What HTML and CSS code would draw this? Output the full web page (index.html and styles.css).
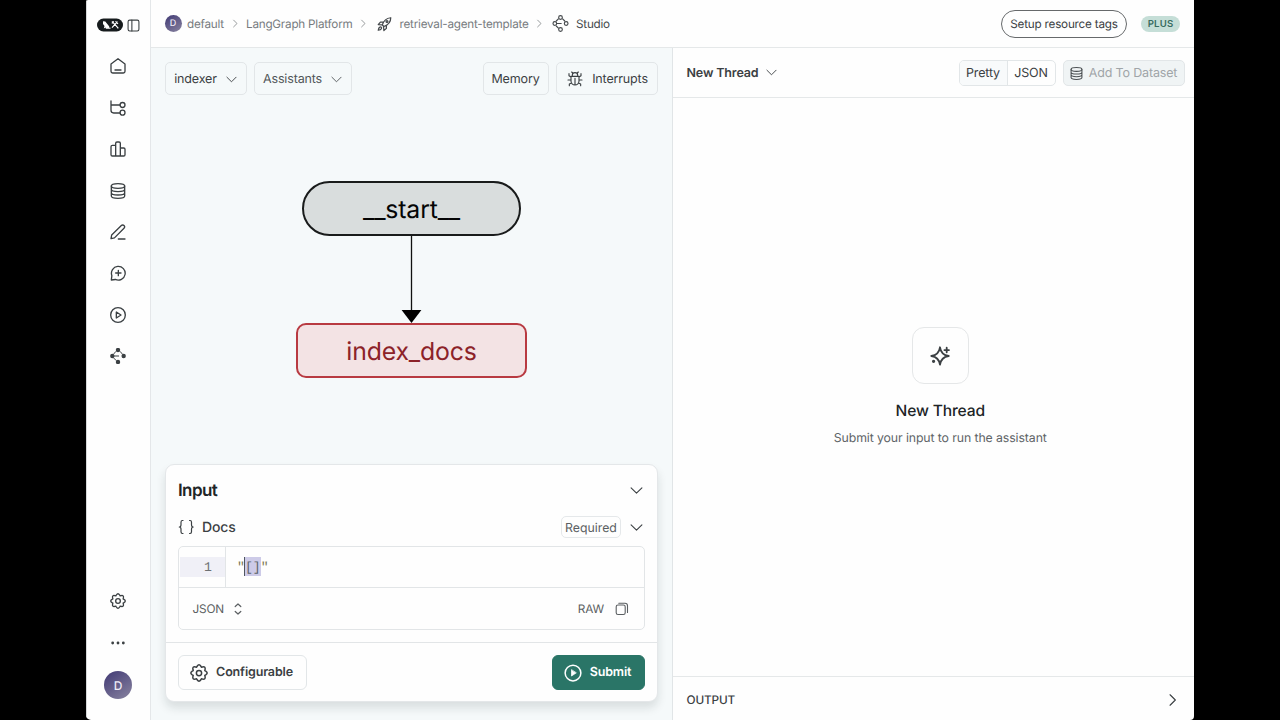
FILE: index.html
```html
<!DOCTYPE html>
<html lang="en">
<head>
    <meta charset="UTF-8">
    <meta name="viewport" content="width=device-width, initial-scale=1.0">
    <title>Studio</title>
    <link rel="stylesheet" href="styles.css">
</head>
<body>
    <!-- shared icons -->
    <svg class="defs" width="0" height="0">
        <symbol id="chevron" viewBox="0 0 24 24"><path d="M2 7l10 10L22 7"/></symbol>
        <symbol id="chevron-right" viewBox="0 0 24 24"><path d="M7 3l9 9-9 9"/></symbol>
        <symbol id="database" viewBox="0 0 24 24"><ellipse cx="12" cy="4.500" rx="10" ry="3.500"/><path d="M2 4.500v15c0 1.900 4.500 3.500 10 3.500s10-1.600 10-3.500v-15M2 9.500c0 1.900 4.500 3.500 10 3.500s10-1.600 10-3.500M2 14.500c0 1.900 4.500 3.500 10 3.500s10-1.600 10-3.500"/></symbol>
        <symbol id="gear" viewBox="0 0 24 24"><circle cx="12" cy="12" r="3.500"/><path d="M9.500 3Q12-.8 14.500 3L15.200 4.300 16.600 3.900Q21 2.900 20.100 7.400L19.700 8.800 21 9.500Q24.800 12 21 14.500L19.700 15.200 20.100 16.600Q21 21 16.600 20.100L15.200 19.700 14.500 21Q12 24.800 9.500 21L8.800 19.700 7.400 20.100Q2.900 21 3.900 16.600L4.300 15.200 3 14.500Q-.8 12 3 9.500L4.300 8.800 3.900 7.400Q2.900 2.900 7.400 3.900L8.800 4.300Z"/></symbol>
        <symbol id="play" viewBox="0 0 24 24"><circle cx="12" cy="12" r="11"/><path d="M9.500 7.500v9l7-4.500z"/></symbol>
    </svg>

    <div class="window">
        <nav class="sidebar">
            <div class="brand">
                <svg class="logo" viewBox="0 0 26 14">
                    <rect width="26" height="13" y=".5" rx="6.5" fill="#161b1d"/>
                    <path d="M6 3.300l2.300.3 3.800 4.600.3 1.600h1.400l-.5 1H8.900l-.4-1.200-1.700.9.700-2.400L6 6z" fill="#fff"/>
                    <path d="M15 3.300l6 6.500M20.500 3.700l-5.500 6M14.800 5.400l2-2M18.500 3.300l2.500 2.500M20 9.500l1.400.6" fill="none" stroke="#fff" stroke-width="1.200"/>
                </svg>
                <svg class="icon panel-icon" viewBox="0 0 24 24"><rect x="2" y="2" width="20" height="20" rx="3"/><path d="M9 2v20"/></svg>
            </div>
            <div class="nav-list">
                <svg class="icon nav-icon" viewBox="0 0 24 24"><path d="M1.500 9L12 1.200 22.500 9v11a2.500 2.500 0 0 1-2.500 2.500H4A2.500 2.500 0 0 1 1.500 20zM7.500 18h9"/></svg>
                <svg class="icon nav-icon" viewBox="0 0 24 24"><path d="M1.500 1.500v14a4 4 0 0 0 4 4H15M1.500 7.500H15"/><circle cx="18.800" cy="7.500" r="3.700"/><circle cx="18.800" cy="19" r="3.700"/></svg>
                <svg class="icon nav-icon" viewBox="0 0 24 24"><path d="M8.500 22.500V3.500a2 2 0 0 1 2-2h3a2 2 0 0 1 2 2v19M8.500 6.500h-5a2 2 0 0 0-2 2v12a2 2 0 0 0 2 2h17a2 2 0 0 0 2-2v-8a2 2 0 0 0-2-2h-5"/></svg>
                <svg class="icon nav-icon"><use href="#database"/></svg>
                <svg class="icon nav-icon" viewBox="0 0 24 24"><path d="M12.500 22.500h10M1.500 22l1-5.500L17 2.300a2.800 2.800 0 0 1 4 4L6.700 20.800z"/></svg>
                <svg class="icon nav-icon" viewBox="0 0 24 24"><path d="M2 22.500l.8-6.500A10.300 10.300 0 1 1 8 21.700zM12.500 8v8M8.500 12h8"/></svg>
                <svg class="icon nav-icon"><use href="#play"/></svg>
                <svg class="icon nav-icon" viewBox="0 0 24 24"><g fill="currentColor"><circle cx="12" cy="3" r="2.300"/><circle cx="3.500" cy="12" r="2.300"/><circle cx="20.500" cy="12" r="2.300"/><circle cx="12" cy="21" r="2.300"/></g><path d="M8.500 5.500L6 8.500M15.500 5.500L18 8.500M6 15.500l3 3M6 12h7" stroke-width="1.500"/></svg>
            </div>
            <div class="nav-bottom">
                <svg class="icon nav-icon"><use href="#gear"/></svg>
                <svg class="icon nav-icon" viewBox="0 0 24 24"><g fill="currentColor" stroke="none"><circle cx="4" cy="12" r="2.100"/><circle cx="12" cy="12" r="2.100"/><circle cx="20" cy="12" r="2.100"/></g></svg>
                <span class="avatar avatar-large">D</span>
            </div>
        </nav>

        <div class="main">
            <header class="topbar">
                <div class="breadcrumb">
                    <span class="avatar">D</span>
                    <span class="crumb crumb-default">default</span>
                    <svg class="icon separator"><use href="#chevron-right"/></svg>
                    <span class="crumb crumb-platform">LangGraph Platform</span>
                    <svg class="icon separator"><use href="#chevron-right"/></svg>
                    <svg class="icon rocket" viewBox="0 0 24 24"><path d="M8.500 13.500C10.500 7 15 2.500 22 2c0 7-4 11.500-11 14zM9.500 9H5.500L2 13l6.500.5M15 14.500V19l-4 3.500-.5-6M4.500 17C2.500 18 2 22 2 22s4-.5 5-2.500a1.800 1.800 0 0 0-2.500-2.500z"/><circle cx="16" cy="8" r="1.500"/></svg>
                    <span class="crumb crumb-template">retrieval-agent-template</span>
                    <svg class="icon separator"><use href="#chevron-right"/></svg>
                    <svg class="icon graph-icon" viewBox="0 0 24 24"><circle cx="12" cy="3.500" r="2.600"/><circle cx="4" cy="12" r="2.600"/><circle cx="20" cy="12" r="2.600"/><circle cx="12" cy="20.500" r="2.600"/><path d="M9 5.500L6 8.500M15 5.500L18 8.500M7 12h6M6 15.500l3 3"/></svg>
                    <span class="crumb current">Studio</span>
                </div>
                <div class="topbar-right">
                    <button class="tags-button">Setup resource tags</button>
                    <span class="plan">PLUS</span>
                </div>
            </header>

            <div class="content">
                <section class="graph-pane">
                    <div class="toolbar">
                        <button class="tool indexer">indexer <svg class="icon chevron-small"><use href="#chevron"/></svg></button>
                        <button class="tool assistants">Assistants <svg class="icon chevron-small"><use href="#chevron"/></svg></button>
                        <button class="tool memory">Memory</button>
                        <button class="tool interrupts">
                            <svg class="icon bug" viewBox="0 0 24 24"><path d="M6 8h12v7a6 6 0 0 1-12 0zM8 8V6.500a4 4 0 0 1 8 0V8M12 11v10M8.500 3L7 1.500M15.500 3L17 1.500M6 13.500H1.500M18 13.500h4.500M6 9L3 7V4M18 9l3-2V4M7 18l-3.500 1.500V22M17 18l3.500 1.500V22"/></svg>
                            Interrupts
                        </button>
                    </div>

                    <div class="graph">
                        <div class="node start-node">__start__</div>
                        <svg class="edge" viewBox="0 0 22 87"><path d="M10.500 0v76" stroke="#111" stroke-width="1.300"/><path d="M.6 74h19.800l-9.900 13z"/></svg>
                        <div class="node docs-node">index_docs</div>
                    </div>

                    <div class="card">
                        <div class="card-head">
                            <h2>Input</h2>
                            <svg class="icon chevron-big"><use href="#chevron"/></svg>
                        </div>
                        <div class="field-head">
                            <svg class="icon braces" viewBox="0 0 17 16"><path d="M5 1.500h-.6Q3 1.500 3 3.200v2.600Q3 8 1.300 8 3 8 3 10.200v2.600q0 1.700 1.400 1.700H5M11.500 1.500h.6Q13.500 1.500 13.500 3.200v2.600Q13.500 8 15.200 8 13.500 8 13.500 10.200v2.600q0 1.700-1.400 1.700h-.6"/></svg>
                            <span class="field-name">Docs</span>
                            <span class="required">Required</span>
                            <svg class="icon chevron-big"><use href="#chevron"/></svg>
                        </div>
                        <div class="editor">
                            <div class="code">
                                <div class="gutter"><span>1</span></div>
                                <div class="line"><span>"</span><span class="selection">[]</span><span>"</span></div>
                            </div>
                            <div class="editor-foot">
                                <span class="format">JSON</span>
                                <svg class="icon updown" viewBox="0 0 8 12"><path d="M1.200 3.500L4 1l2.800 2.500M1.200 8.500L4 11l2.800-2.500"/></svg>
                                <span class="raw">RAW</span>
                                <svg class="icon copy" viewBox="0 0 14 14"><rect x="1.200" y="3" width="9" height="9.500" rx="1.800"/><path d="M3.800 1.200h6.200a2.500 2.500 0 0 1 2.500 2.500v6.800"/></svg>
                            </div>
                        </div>
                        <div class="card-foot">
                            <button class="configurable"><svg class="icon button-icon"><use href="#gear"/></svg>Configurable</button>
                            <button class="submit"><svg class="icon submit-icon" viewBox="0 0 24 24"><circle cx="12" cy="12" r="10.500"/><path d="M10 8v8l6-4z" fill="currentColor" stroke-width="1"/></svg>Submit</button>
                        </div>
                    </div>
                </section>

                <section class="thread-pane">
                    <div class="thread-head">
                        <span class="thread-name">New Thread</span>
                        <svg class="icon chevron-small"><use href="#chevron"/></svg>
                        <div class="toggle"><span class="pretty">Pretty</span><span class="json">JSON</span></div>
                        <button class="dataset"><svg class="icon"><use href="#database"/></svg>Add To Dataset</button>
                    </div>
                    <div class="empty">
                        <div class="empty-icon">
                            <svg class="icon" viewBox="0 0 24 24"><path d="M12 2.500q1.200 8.300 9.500 9.500-8.300 1.200-9.500 9.500Q10.800 13.200 2.500 12 10.800 10.800 12 2.500zM19.300 3v5M16.800 5.500h5"/><circle cx="5" cy="17.800" r=".8" fill="currentColor"/></svg>
                        </div>
                        <h3>New Thread</h3>
                        <p>Submit your input to run the assistant</p>
                    </div>
                    <div class="output">
                        <span>OUTPUT</span>
                        <svg class="icon"><use href="#chevron-right"/></svg>
                    </div>
                </section>
            </div>
        </div>
    </div>
</body>
</html>
```
FILE: styles.css
```css
* {
    box-sizing: border-box;
}
body {
    margin: 0;
    height: 720px;
    background-color: #000;
    font-family: Inter, sans-serif;
    font-size: 12.5px;
    letter-spacing: -0.15px;
    color: #3b4043;
    text-rendering: geometricPrecision;
    overflow: hidden;
}
button {
    font-family: inherit;
    font-size: 12.5px;
    letter-spacing: inherit;
    color: inherit;
    text-rendering: inherit;
    padding: 0;
    background: none;
    border: 1px solid #e2e6e8;
    border-radius: 5px;
    display: flex;
    align-items: center;
    white-space: nowrap;
}
h2, h3, p {
    margin: 0;
}
.defs {
    position: absolute;
}
.icon {
    width: 16px;
    height: 16px;
    flex: none;
    fill: none;
    stroke: currentColor;
    stroke-width: 2;
    stroke-linecap: round;
    stroke-linejoin: round;
}
.window {
    width: 1107.5px;
    height: 720px;
    margin-left: 86px;
    display: flex;
    background-color: #fefefe;
    border-radius: 2px 0 4px 5px;
    overflow: hidden;
}

/* sidebar */
.sidebar {
    width: 65px;
    padding-right: 1px;
    border-left: 1px solid #d6d8d9;
    border-right: 1px solid #e4e7e9;
    display: flex;
    flex-direction: column;
    align-items: center;
}
.brand {
    display: flex;
    align-items: center;
    gap: 4px;
    margin-top: 18px;
    height: 14px;
}
.logo {
    width: 26px;
    height: 14px;
}
.panel-icon {
    width: 13px;
    height: 13px;
}
.nav-list {
    margin-top: 26.4px;
    display: flex;
    flex-direction: column;
    gap: 25.4px;
}
.nav-bottom {
    margin-top: auto;
    margin-bottom: 21px;
    display: flex;
    flex-direction: column;
    align-items: center;
    gap: 25.5px;
}
.avatar {
    width: 17px;
    height: 17px;
    flex: none;
    border-radius: 50%;
    background: linear-gradient(145deg, #403974, #8984a0);
    color: #eeeaf6;
    font-size: 9px;
    font-weight: 500;
    display: flex;
    align-items: center;
    justify-content: center;
}
.avatar-large {
    width: 28px;
    height: 28px;
    font-size: 12px;
    margin-top: -5px;
}

/* top bar */
.main {
    flex: 1;
    min-width: 0;
    display: flex;
    flex-direction: column;
}
.topbar {
    height: 48px;
    border-bottom: 1px solid #e5e8e9;
    padding: 0 13.5px;
    display: flex;
    align-items: center;
    justify-content: space-between;
}
.breadcrumb {
    display: flex;
    align-items: center;
    color: #777b7e;
    font-size: 11.7px;
    letter-spacing: -0.22px;
    white-space: nowrap;
}
.separator {
    width: 9px;
    height: 9px;
    margin: 0 6.5px;
}
.crumb-default {
    margin-left: 5.5px;
    width: 37px;
}
.crumb-platform {
    width: 106px;
}
.rocket {
    width: 15px;
    margin: 0 8px 0 2.5px;
}
.crumb-template {
    width: 129px;
}
.graph-icon {
    width: 17px;
    height: 17px;
    margin-left: 1.5px;
    margin-right: 7px;
    stroke-width: 1.6;
}
.graph-icon, .current, .rocket {
    color: #45494c;
}
.topbar-right {
    display: flex;
    align-items: center;
    gap: 14px;
}
.tags-button {
    width: 126px;
    height: 28px;
    border: 1px solid #66696b;
    border-radius: 14px;
    justify-content: center;
    font-size: 11.7px;
    letter-spacing: -0.2px;
}
.plan {
    width: 39px;
    height: 16px;
    border-radius: 8px;
    background-color: #c5ded7;
    color: #386c60;
    font-size: 9.6px;
    font-weight: 600;
    letter-spacing: 0.2px;
    line-height: 17px;
    text-align: center;
}

/* graph */
.content {
    flex: 1;
    min-height: 0;
    display: flex;
}
.graph-pane {
    width: 522px;
    background-color: #f5f9fa;
    border-right: 1px solid #e1e5e7;
    padding: 14px 14px 18px;
    display: flex;
    flex-direction: column;
}
.toolbar {
    display: flex;
    gap: 7px;
}
.tool {
    height: 33px;
    padding: 1px 1px 0 0;
    justify-content: center;
}
.indexer {
    width: 82px;
    gap: 9px;
}
.assistants {
    width: 98px;
    gap: 9px;
    color: #515659;
}
.memory {
    width: 66px;
    margin-left: auto;
}
.interrupts {
    width: 102px;
    padding: 1px 0 0 1px;
    gap: 9px;
}
.bug {
    stroke-width: 1.7;
}
.chevron-small {
    width: 11px;
    height: 11px;
}
.graph {
    flex: 1;
    padding-top: 86px;
    display: flex;
    flex-direction: column;
    align-items: center;
}
.node {
    height: 55px;
    font-size: 24.8px;
    display: flex;
    align-items: center;
    justify-content: center;
}
.start-node {
    width: 219px;
    padding-top: 1px;
    border: 2px solid #191b1b;
    border-radius: 28px;
    background-color: #d9dddd;
    color: #050505;
}
.docs-node {
    width: 231px;
    border: 2px solid #b83a41;
    border-radius: 10px;
    background-color: #f3e3e4;
    color: #8c2228;
}
.edge {
    width: 22px;
    height: 87px;
    flex: none;
}

/* input card */
.card {
    height: 238px;
    background-color: #fefefe;
    border: 1px solid #e4e7e9;
    border-radius: 9px;
    box-shadow: 0 6px 10px rgba(20, 30, 35, 0.12);
}
.card-head, .field-head {
    display: flex;
    align-items: center;
    padding: 0 14px 0 12px;
}
.card-head {
    height: 50px;
    justify-content: space-between;
}
.card-head h2 {
    padding-top: 1px;
    font-size: 17px;
    font-weight: 600;
    letter-spacing: -0.6px;
    color: #202426;
}
.chevron-big {
    width: 13px;
    height: 13px;
}
.field-head {
    height: 24px;
}
.braces {
    width: 17px;
    stroke-width: 1.2;
}
.field-name {
    margin-left: 7px;
    font-size: 14px;
    font-weight: 500;
    letter-spacing: -0.1px;
}
.required {
    width: 60px;
    height: 22px;
    margin-left: auto;
    margin-right: 9px;
    border: 1px solid #e5e8ea;
    border-radius: 5px;
    color: #5b5f62;
    font-size: 12.3px;
    letter-spacing: 0;
    line-height: 21px;
    text-align: center;
}
.editor {
    height: 84px;
    margin: 7px 12px 12px;
    border: 1px solid #e2e5e7;
    border-radius: 5px;
}
.code {
    height: 41px;
    display: flex;
    border-bottom: 1px solid #e2e5e7;
    font-family: "Liberation Mono", monospace;
    font-size: 13.2px;
    letter-spacing: 0;
}
.gutter {
    width: 47px;
    padding: 10px 0 0 1px;
    border-right: 1px solid #e2e5e7;
}
.gutter span {
    display: block;
    height: 20px;
    padding-right: 13px;
    background-color: #f0f0f7;
    color: #6d7073;
    line-height: 21px;
    text-align: right;
}
.line {
    display: flex;
    padding: 10px 0 0 11px;
    line-height: 21px;
    color: #7b7754;
}
.selection {
    height: 19px;
    margin-left: -1px;
    background-color: #cdcbe8;
    border-left: 1px solid #4f5560;
    color: #5b6369;
}
.editor-foot {
    height: 41px;
    padding: 0 15px 0 13.5px;
    display: flex;
    align-items: center;
    color: #5b5f62;
    font-size: 11.8px;
}
.updown {
    width: 8px;
    height: 12px;
    margin-left: 10px;
    stroke-width: 1.2;
}
.raw {
    margin-left: auto;
}
.copy {
    width: 14px;
    height: 14px;
    margin-left: 11px;
    stroke-width: 1.1;
}
.card-foot {
    border-top: 1px solid #e2e5e7;
    padding: 12px;
    display: flex;
    justify-content: space-between;
}
.configurable, .submit {
    height: 35px;
    justify-content: center;
    font-weight: 600;
    gap: 8px;
    border-radius: 6px;
    padding: 0 2px 0 0;
}
.configurable {
    width: 129px;
}
.submit {
    width: 93px;
    background-color: #2a7567;
    border-color: #2a7567;
    color: #fff;
}
.button-icon, .submit-icon {
    width: 18px;
    height: 18px;
}

/* thread */
.thread-pane {
    flex: 1;
    min-width: 0;
    display: flex;
    flex-direction: column;
}
.thread-head {
    height: 50px;
    padding: 0 9px 0 13.5px;
    border-bottom: 1px solid #e5e8e9;
    display: flex;
    align-items: center;
}
.thread-name {
    padding-top: 1px;
    font-weight: 600;
    margin-right: 8px;
}
.toggle {
    height: 26px;
    margin-left: auto;
    margin-right: 7px;
    display: flex;
    border: 1px solid #e2e6e8;
    border-radius: 5px;
    line-height: 25px;
    text-align: center;
    overflow: hidden;
}
.pretty {
    width: 48px;
    background-color: #f8fafb;
    border-right: 1px solid #e2e6e8;
}
.json {
    width: 47px;
}
.dataset {
    width: 122px;
    height: 26px;
    padding-top: 1px;
    justify-content: center;
    gap: 6px;
    background-color: #f0f4f5;
    color: #a0a5a8;
}
.dataset .icon {
    width: 13px;
    height: 13px;
    color: #4b5053;
}
.empty {
    flex: 1;
    padding-left: 14px;
    display: flex;
    flex-direction: column;
    align-items: center;
    justify-content: center;
}
.empty-icon {
    width: 57px;
    height: 57px;
    border: 1px solid #e5e7e8;
    border-radius: 12px;
    display: flex;
    align-items: center;
    justify-content: center;
}
.empty-icon .icon {
    width: 22px;
    height: 22px;
}
.empty h3 {
    margin-top: 17px;
    font-size: 15.6px;
    line-height: 20px;
    font-weight: 500;
    color: #202426;
}
.empty p {
    margin-top: 8px;
    line-height: 18px;
    font-size: 12.3px;
    letter-spacing: -0.1px;
    color: #606467;
}
.output {
    height: 44px;
    padding: 2px 13.5px 0;
    border-top: 1px solid #e5e8e9;
    display: flex;
    align-items: center;
    justify-content: space-between;
    font-size: 11.8px;
    font-weight: 500;
}
.output .icon {
    width: 14px;
    height: 14px;
}
```
